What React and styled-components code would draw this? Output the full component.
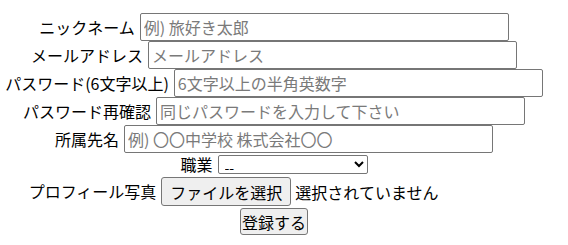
import React from 'react';
import styled, { createGlobalStyle } from 'styled-components';

const GlobalStyle = createGlobalStyle`
  body {
    margin: 0;
    background: #fff;
    font-family: "Noto Sans CJK JP", "Noto Sans", sans-serif;
    color: #000;
  }
`;

const Form = styled.form`
  width: 548px;
  padding-top: 13px;
  display: flex;
  flex-direction: column;
`;

const Row = styled.div`
  height: ${props => props.h || 28}px;
  display: flex;
  align-items: center;
  justify-content: center;
  gap: 5px;
  font-size: 16px;
`;

const Label = styled.label`
  font-size: 16px;
  line-height: 23px;
  white-space: nowrap;
`;

const TextInput = styled.input`
  box-sizing: border-box;
  width: 369px;
  height: 28px;
  padding: 1px 3px;
  border: 1px solid #767676;
  border-radius: 2px;
  font-family: inherit;
  font-size: 16px;
  color: #000;
  outline: none;

  &::placeholder {
    color: #7a7a7a;
  }
`;

const Select = styled.select`
  box-sizing: border-box;
  width: 150px;
  height: 19px;
  font-family: inherit;
  font-size: 14px;
  line-height: 17px;
  border: 1px solid #767676;
  border-radius: 2px;
  background: #fff;
  padding: 0 2px;
`;

const FileField = styled.div`
  width: 358px;
  display: flex;
  align-items: center;
  gap: 4px;
`;

const Button = styled.button`
  box-sizing: border-box;
  height: ${props => props.h}px;
  padding: 0 ${props => props.px}px;
  font-family: inherit;
  font-size: 16px;
  color: #000;
  background: #efefef;
  border: 1px solid #767676;
  border-radius: 3px;
  white-space: nowrap;
`;

const fields = [
  { label: 'ニックネーム', placeholder: '例) 旅好き太郎', type: 'text' },
  { label: 'メールアドレス', placeholder: 'メールアドレス', type: 'email' },
  { label: 'パスワード(6文字以上)', placeholder: '6文字以上の半角英数字', type: 'password' },
  { label: 'パスワード再確認', placeholder: '同じパスワードを入力して下さい', type: 'password' },
  { label: '所属先名', placeholder: '例) 〇〇中学校 株式会社〇〇', type: 'text' },
];

export default function App() {
  return (
    <>
      <GlobalStyle />
      <Form onSubmit={e => e.preventDefault()}>
        {fields.map(f => (
          <Row key={f.label}>
            <Label>{f.label}</Label>
            <TextInput type={f.type} placeholder={f.placeholder} />
          </Row>
        ))}
        <Row h={23}>
          <Label>職業</Label>
          <Select defaultValue="">
            <option value="">--</option>
          </Select>
        </Row>
        <Row h={31}>
          <Label>プロフィール写真</Label>
          <FileField>
            <Button type="button" h={29} px={8}>ファイルを選択</Button>
            <span>選択されていません</span>
          </FileField>
        </Row>
        <Row h={29}>
          <Button type="submit" h={27} px={1}>登録する</Button>
        </Row>
      </Form>
    </>
  );
}
